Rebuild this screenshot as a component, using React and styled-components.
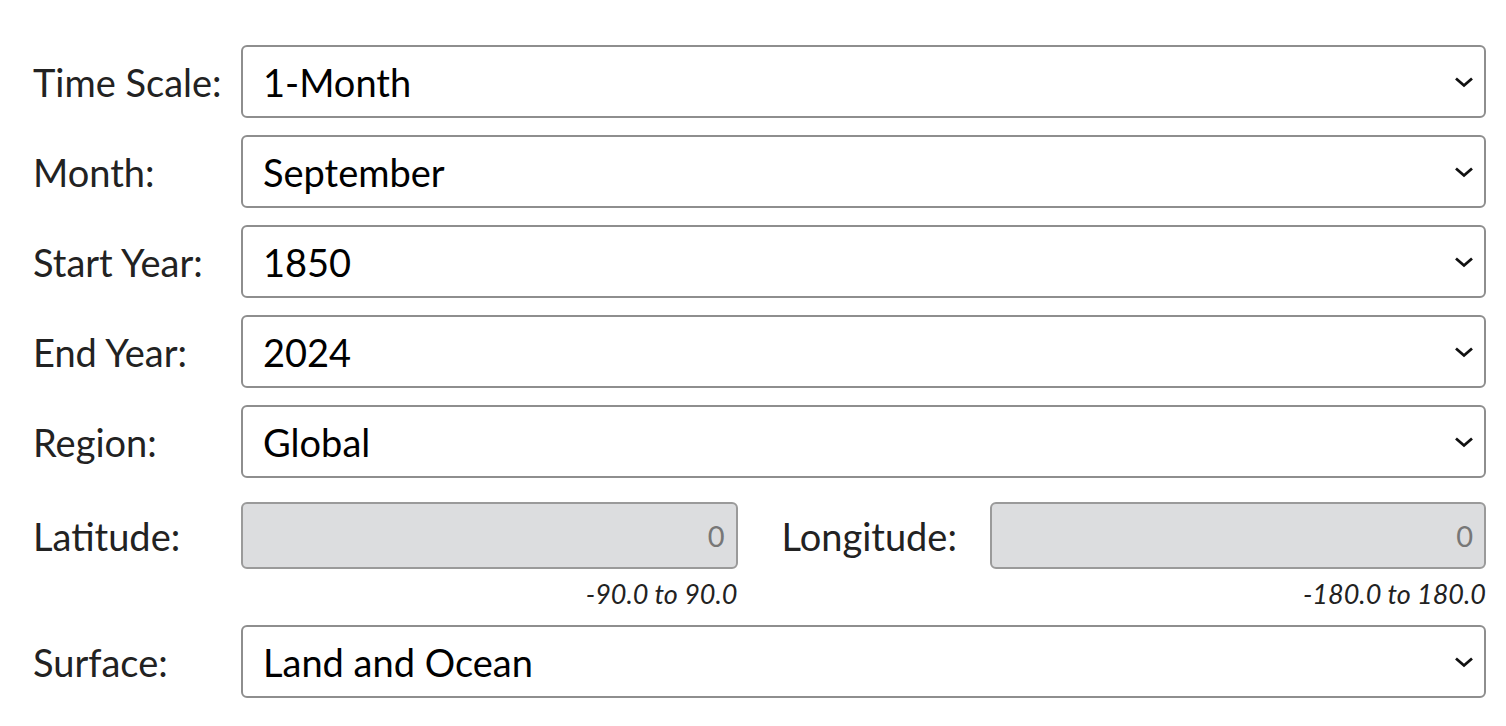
import styled, { createGlobalStyle } from "styled-components";

const GlobalStyle = createGlobalStyle`
  body {
    margin: 0;
    background: #fff;
    font-family: Lato, "Noto Sans", sans-serif;
  }
`;

const Form = styled.form`
  padding: 45px 20px 0 33px;
  display: flex;
  flex-direction: column;
  gap: 17px;
`;

const Row = styled.div`
  display: grid;
  grid-template-columns: 208px 1fr;
  align-items: ${(p) => (p.$top ? "start" : "center")};
  padding-top: ${(p) => (p.$top ? 7 : 0)}px;
`;

const Label = styled.label`
  font-size: 38px;
  color: #222;
  padding-left: ${(p) => p.$indent || 0}px;
  height: ${(p) => (p.$tall ? "67px" : "auto")};
  display: flex;
  align-items: center;
`;

const SelectWrap = styled.div`
  height: 73px;
  border: 2px solid #8e8e8e;
  border-radius: 6px;
  box-sizing: border-box;
  display: flex;
  align-items: center;
  padding: 0 10px 0 20px;
  font-size: 38px;
  color: #000;
`;

const Chevron = styled.svg`
  margin-left: auto;
  flex-shrink: 0;
  width: 20px;
  height: 12px;
`;

const CoordGrid = styled.div`
  display: grid;
  grid-template-columns: 1fr 252px 1fr;
  row-gap: 4px;
  align-items: center;
`;

const NumberBox = styled.div`
  height: 67px;
  border: 2px solid #9a9a9a;
  border-radius: 6px;
  box-sizing: border-box;
  background: #dcdddf;
  display: flex;
  align-items: center;
  justify-content: flex-end;
  padding: 0 11px;
  font-size: 29px;
  color: #777;
`;

const Hint = styled.div`
  font-size: 27px;
  line-height: 28px;
  padding-top: 7px;
  font-style: italic;
  color: #222;
  text-align: right;
`;

const Spacer = styled.div``;

function Select({ value }) {
  return (
    <SelectWrap>
      {value}
      <Chevron viewBox="0 0 20 12">
        <path d="M2 2.5 L10 9.5 L18 2.5" fill="none" stroke="#111" strokeWidth="2.8" />
      </Chevron>
    </SelectWrap>
  );
}

export default function App() {
  return (
    <>
      <GlobalStyle />
      <Form>
        <Row>
          <Label>Time Scale:</Label>
          <Select value="1-Month" />
        </Row>
        <Row>
          <Label>Month:</Label>
          <Select value="September" />
        </Row>
        <Row>
          <Label>Start Year:</Label>
          <Select value="1850" />
        </Row>
        <Row>
          <Label>End Year:</Label>
          <Select value="2024" />
        </Row>
        <Row>
          <Label>Region:</Label>
          <Select value="Global" />
        </Row>
        <Row $top>
          <Label $tall>Latitude:</Label>
          <CoordGrid>
            <NumberBox>0</NumberBox>
            <Label $indent={44}>Longitude:</Label>
            <NumberBox>0</NumberBox>
            <Hint>-90.0 to 90.0</Hint>
            <Spacer />
            <Hint>-180.0 to 180.0</Hint>
          </CoordGrid>
        </Row>
        <Row>
          <Label>Surface:</Label>
          <Select value="Land and Ocean" />
        </Row>
      </Form>
    </>
  );
}
